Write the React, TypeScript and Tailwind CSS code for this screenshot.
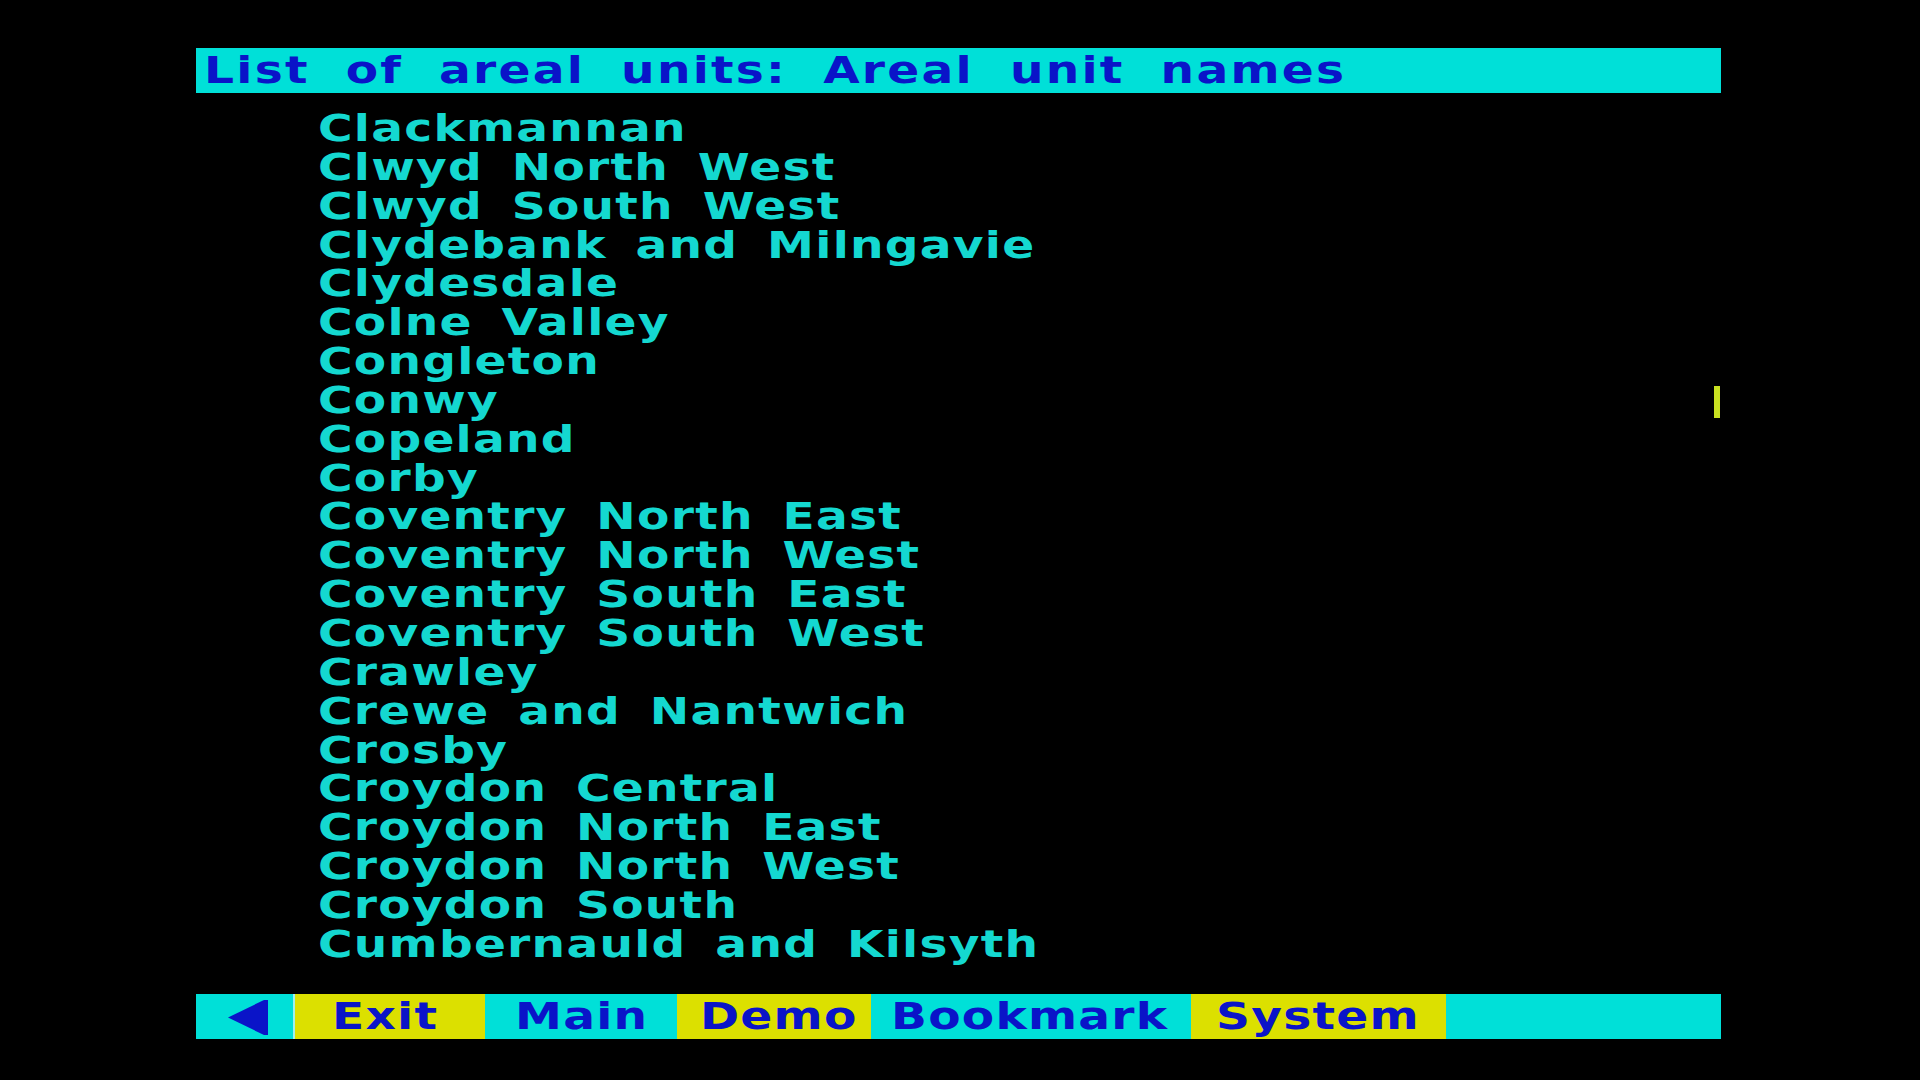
import { useMemo } from 'react';

const units = [
    'Clackmannan',
    'Clwyd North West',
    'Clwyd South West',
    'Clydebank and Milngavie',
    'Clydesdale',
    'Colne Valley',
    'Congleton',
    'Conwy',
    'Copeland',
    'Corby',
    'Coventry North East',
    'Coventry North West',
    'Coventry South East',
    'Coventry South West',
    'Crawley',
    'Crewe and Nantwich',
    'Crosby',
    'Croydon Central',
    'Croydon North East',
    'Croydon North West',
    'Croydon South',
    'Cumbernauld and Kilsyth',
];

// chunky teletext-ish look: wide bold sans, stretched sideways
const font = "font-['DejaVu_Sans',sans-serif] font-bold text-[38px] tracking-[1px] [word-spacing:9px]";

function Wide({ children, className = '' }: { children: string; className?: string }) {
    return <span className={`inline-block origin-left scale-x-[1.24] whitespace-pre ${className}`}>{children}</span>;
}

function BackArrow() {
    return (
        <svg width="40" height="35" viewBox="0 0 40 35" className="block">
            <polygon points="0,17.5 36,0 40,0 40,35 36,35" fill="#0a14c8" />
        </svg>
    );
}

export default function App() {
    const rows = useMemo(() => units, []);

    return (
        <div className="w-[1920px] h-[1080px] bg-black overflow-hidden relative">
            <div className="ml-[196px] w-[1525px] pt-[48px] flex flex-col">
                <div className={`h-[45px] bg-[#00e0d8] text-[#0a14c8] pl-[8px] leading-[45px] ${font}`}>
                    <Wide className="tracking-[1.8px] [word-spacing:14px]">List of areal units: Areal unit names</Wide>
                </div>

                <div className="pt-[16px] pl-[122px] flex flex-col">
                    {rows.map((name) => (
                        <div key={name} className={`h-[38.85px] leading-[38.85px] text-[#14d8d0] ${font}`}>
                            <Wide>{name}</Wide>
                        </div>
                    ))}
                </div>

                <div className={`mt-[30px] h-[45px] flex leading-[45px] text-[#0a14c8] ${font}`}>
                    <div className="w-[97px] bg-[#00e0d8] flex items-center pl-[32px] pt-[3px]">
                        <BackArrow />
                    </div>
                    <div className="w-[192px] bg-[#dce000] pl-[37px] border-l-2 border-[#a0f0f0]"><Wide>Exit</Wide></div>
                    <div className="w-[192px] bg-[#00e0d8] pl-[30px]"><Wide>Main</Wide></div>
                    <div className="w-[194px] bg-[#dce000] pl-[23px]"><Wide>Demo</Wide></div>
                    <div className="w-[320px] bg-[#00e0d8] pl-[20px]"><Wide>Bookmark</Wide></div>
                    <div className="w-[255px] bg-[#dce000] pl-[25px]"><Wide>System</Wide></div>
                    <div className="flex-1 bg-[#00e0d8]" />
                </div>
            </div>

            <div className="absolute left-[1714px] top-[386px] w-[6px] h-[32px] bg-[#c8e020]" />
        </div>
    );
}
